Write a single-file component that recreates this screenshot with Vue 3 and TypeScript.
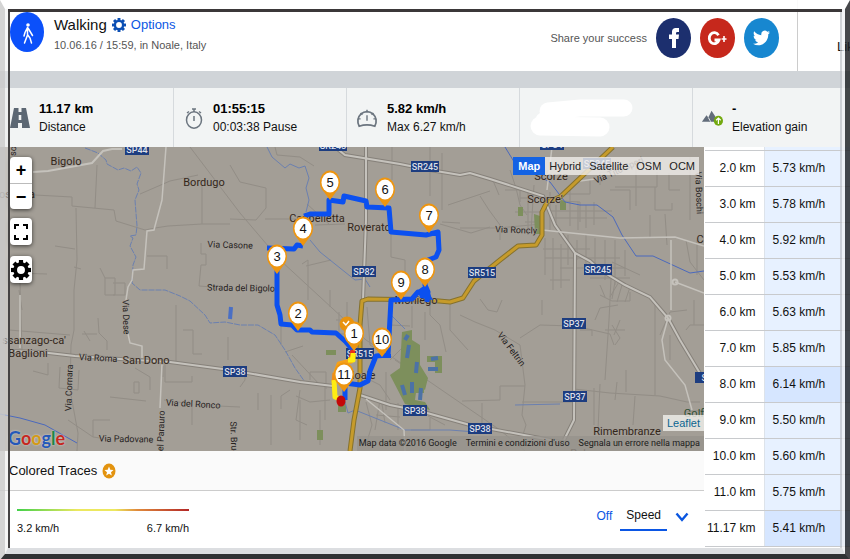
<script setup lang="ts">
import { ref } from 'vue'

interface Split { km: string; speed: string; peak?: boolean }
interface Pin { n: number; x: number; y: number }
interface Label { t: string; x: number; y: number; s?: number; r?: number }

const splits: Split[] = [
  { km: '2.0 km', speed: '5.73 km/h' },
  { km: '3.0 km', speed: '5.78 km/h' },
  { km: '4.0 km', speed: '5.92 km/h' },
  { km: '5.0 km', speed: '5.53 km/h' },
  { km: '6.0 km', speed: '5.63 km/h' },
  { km: '7.0 km', speed: '5.85 km/h' },
  { km: '8.0 km', speed: '6.14 km/h', peak: true },
  { km: '9.0 km', speed: '5.50 km/h' },
  { km: '10.0 km', speed: '5.60 km/h' },
  { km: '11.0 km', speed: '5.75 km/h' },
  { km: '11.17 km', speed: '5.41 km/h', peak: true },
]

const pins: Pin[] = [
  { n: 9, x: 401, y: 283 }, { n: 8, x: 425, y: 270 }, { n: 7, x: 429, y: 216 },
  { n: 6, x: 385, y: 190 }, { n: 5, x: 330, y: 183 }, { n: 4, x: 303, y: 229 },
  { n: 3, x: 277, y: 257 }, { n: 2, x: 298, y: 314 }, { n: 1, x: 354, y: 334 },
  { n: 10, x: 382, y: 340 }, { n: 11, x: 344, y: 375 },
]

const towns: Label[] = [
  { t: 'Bigolo', x: 66, y: 165 }, { t: 'Bordugo', x: 204, y: 186 },
  { t: 'Cappelletta', x: 317, y: 222 }, { t: 'Roverato', x: 369, y: 231 },
  { t: 'Scorze', x: 551, y: 180 }, { t: "Scorze'", x: 545, y: 203 },
  { t: 'Moniego', x: 416, y: 304 }, { t: 'Noale', x: 361, y: 379 },
  { t: "ssanzago-ca'", x: 34, y: 344 }, { t: 'Baglioni', x: 28, y: 357 },
  { t: 'San Dono', x: 146, y: 364 }, { t: 'Rimembranze', x: 627, y: 435 },
  { t: 'C', x: 700, y: 243 }, { t: 'Robegano', x: 595, y: 457 },
  { t: 'os', x: 5, y: 198 }, { t: 'a', x: 32, y: 198 },
]

const streets: Label[] = [
  { t: 'Via Casone', x: 230, y: 248, r: 2 }, { t: 'Strada del Bigolo', x: 241, y: 291, r: 1 },
  { t: 'Via Roncly', x: 516, y: 233, r: 2 }, { t: 'Via Tito Speri', x: 620, y: 173, r: -24 },
  { t: 'Via Roma', x: 98, y: 361, r: 3 }, { t: 'Via del Ronco', x: 193, y: 407, r: 3 },
  { t: 'Via Padovane', x: 126, y: 442, r: 1 }, { t: 'Via Dese', x: 123, y: 317, r: 88 },
  { t: 'Via Cornara', x: 72, y: 388, r: -88 }, { t: 'el Parauro', x: 164, y: 431, r: -88 },
  { t: 'Str. Bruga', x: 231, y: 441, r: 88 }, { t: 'Via Feltrin', x: 509, y: 351, r: 53 },
  { t: 'Via Boschi', x: 696, y: 193, r: 88 }, { t: 'so', x: 16, y: 151, r: -88 },
]

const shields: Label[] = [
  { t: 'SP44', x: 137, y: 150 }, { t: 'SR245', x: 333, y: 146 }, { t: 'SP84', x: 552, y: 145 },
  { t: 'SR245', x: 425, y: 167 }, { t: 'SP82', x: 364, y: 272 }, { t: 'SR515', x: 482, y: 273 },
  { t: 'SR245', x: 598, y: 270 }, { t: 'SP37', x: 574, y: 324 }, { t: 'SP37', x: 575, y: 397 },
  { t: 'SR515', x: 360, y: 354 }, { t: 'SP38', x: 235, y: 372 }, { t: 'SP38', x: 415, y: 411 },
  { t: 'SP38', x: 480, y: 429 }, { t: 'SP', x: 707, y: 378 }, { t: 'SR245', x: 597, y: 164 },
]

const minorRoads: string[] = [
  'M35 195 72 197V206L114 210 116 221 145 230 155 228 168 226 202 224',
  'M97 165 95 208M76 208 77 260 74 290 74 330 71 345 70 390 78 433 77 451M55 246 75 249',
  'M74 267 81 269M100 268 105 278V295H115V278H105M113 283H125V295H113M147 256H167V269',
  'M140 194 170 181 198 175M190 147 240 213 280 260 345 320 366 340 430 382 500 430 525 451',
  'M202 185V224L230 224M201 243V254H206V265H201L199 286 212 287M15 273 47 274M19 290 22 310',
  'M20 283 22 350M9 330 70 335M82 334H97M98 318 99 333 107 341 107 350M84 331 90 341',
  'M33 371 48 375V363M60 367 59 388 78 390 79 370M68 420 93 437V420H110M93 437 107 439',
  'M176 305V362M183 330H193V354H202M228 337V360M135 368 150 377V390M134 382H139V393H134Z',
  'M110 397 146 401M163 366V377M165 360V382H192V376M164 400 192 404V425M195 405 240 407',
  'M230 165 240 182 266 188V208L256 220 230 219M265 219 300 219M307 204 330 225M315 225 345 224',
  'M275 147 277 155 300 157 314 166M392 147V180M430 147V196M442 153V210M442 222 460 223',
  'M440 224 471 233 490 227M391 232 391 257 405 260V290M302 264 308 260V300M306 266 331 260',
  'M367 307 370 345 382 353M330 307V290M240 387 245 380V375M258 393V410M281 325V345M285 352 303 346',
  'M326 389V372H310V380M292 355 320 385M296 396 310 402 330 400M300 390 296 420 307 425M325 385V420',
  'M271 395V445M300 400V440M320 410V445M386 372 386 410M395 360 410 370 420 390M405 345 390 360',
  'M448 205 490 191M480 196 489 210 500 225V240M460 228 498 228 542 224M510 170 516 188 520 205 527 215',
  'M505 190H520V202M492 178 499 195M528 190V235M534 185 531 231M520 198H540M515 212H540M525 222H540',
  'M550 192V230M556 205V225M562 201 580 202V222M570 190V226M578 202V230M586 205V228M594 202V225',
  'M548 211H612M550 218H607M563 194H590V180M600 185V172H620V166M610 190H630V210M636 166V206',
  'M545 238V275M553 238V290M561 244V288M568 235V265M577 240V260M586 235V268M595 238V272M605 240V280M615 240V285',
  'M543 249H590M545 258H620M560 268H625M590 278H630M550 280H570M612 262 640 275M625 250V276',
  'M615 187H657V172M655 187V210H672V203M669 173V190H680M690 157V220M665 214 667 245M650 238V215',
  'M611 279 609 320 605 380M600 285 605 297M615 282 612 299M622 285 617 302M630 287 625 302M620 280 610 297',
  'M460 315 475 322 495 330 520 345 525 385 522 415 526 425 522 438M520 338 540 325 573 326',
  'M480 299 488 310 497 312 502 300M542 300V315M575 326 610 334 614 345M580 330H592V336',
  'M525 386H500V400L462 401M522 402 573 402M482 403V430M655 302V395M600 384 598 430M617 382 615 400',
  'M574 389 610 393 660 396 687 402 700 402M594 388V425M635 396 633 425M626 370V392M618 305 600 308 595 320',
  'M612 325 620 338 615 345M614 335 620 320M605 330H625M600 295 612 301H630V292M660 335 670 312 687 310',
  'M686 330 690 325H704M686 240 690 262 704 280M697 240V275M670 335V360M705 410 685 412M694 300V325',
  'M290 390 281 396V409M380 400 375 430M370 380 380 385 390 400M411 430H430V418M428 416 445 425',
  'M366 402 372 425 366 445M382 404 385 423M376 415 400 417M398 403 398 430M430 300V315L440 325 446 352',
  'M450 302V330L468 350M412 306V328M425 312V340M390 325 410 326M339 312V334H349M347 302V320H336',
]

const layers = ['Map', 'Hybrid', 'Satellite', 'OSM', 'OCM']
const layer = ref('Map')
const trace = ref('Speed')
const teeth = [0, 45, 90, 135, 180, 225, 270, 315]
</script>

<template>
  <div class="page">
    <header class="head">
      <span class="avatar">
        <svg viewBox="0 0 34 40" aria-hidden="true">
          <circle cx="18" cy="13" r="1.8" fill="#fff" />
          <path d="M17.5 15.5 15 20.500 14 24M18 16 21 21 22.500 23.500M17.500 16V23L14.500 31M17.800 23 20 26 21.500 31" fill="none" stroke="#fff" stroke-width="1.500" stroke-linecap="round" />
        </svg>
      </span>
      <div class="title">
        <h1>
          Walking
          <a class="options" href="#options">
            <svg class="gear" viewBox="-12 -12 24 24" aria-hidden="true">
              <circle r="7" fill="none" stroke="currentColor" stroke-width="4" />
              <rect v-for="a in teeth" :key="a" x="-2.500" y="-12" width="5" height="5" fill="currentColor" :transform="`rotate(${a})`" />
            </svg>
            Options
          </a>
        </h1>
        <p>10.06.16 / 15:59, in Noale, Italy</p>
      </div>
      <div class="share">
        <span>Share your success</span>
        <a class="soc fb" href="#facebook" aria-label="Facebook">
          <svg viewBox="0 0 35 40"><path d="M16 30V21H13V16.500H16V14.500C16 11 17.500 10 20 10H23V14H21.500C20.300 14 20 14.500 20 15.500V16.500H23L22.500 21H20V30Z" fill="#fff" /></svg>
        </a>
        <a class="soc gp" href="#google" aria-label="Google Plus">
          <svg viewBox="0 0 35 40"><path d="M18.500 17.200A5 5.500 0 1 0 19 22H14.500" fill="none" stroke="#fff" stroke-width="2.800" /><path d="M24 18V24M21.500 21H26.500" stroke="#fff" stroke-width="1.600" /></svg>
        </a>
        <a class="soc tw" href="#twitter" aria-label="Twitter">
          <svg viewBox="0 0 24 24" preserveAspectRatio="none" class="bird"><path d="M23.950 4.570a10 10 0 0 1-2.820.770 4.960 4.960 0 0 0 2.160-2.720c-.95.560-2 .960-3.130 1.180a4.920 4.920 0 0 0-8.380 4.480C7.690 8.090 4.070 6.130 1.640 3.160a4.820 4.820 0 0 0-.67 2.480c0 1.710.87 3.210 2.190 4.100a4.900 4.900 0 0 1-2.230-.620v.06a4.920 4.920 0 0 0 3.950 4.830 5 5 0 0 1-2.210.080 4.940 4.940 0 0 0 4.600 3.420A9.870 9.870 0 0 1 0 19.540a14 14 0 0 0 7.550 2.210c9.050 0 14-7.500 14-13.980 0-.21 0-.42-.02-.630a9.940 9.940 0 0 0 2.460-2.550z" fill="#fff" /></svg>
        </a>
      </div>
      <div class="like">Like</div>
    </header>

    <section class="stats">
      <div class="stat first">
        <svg class="ico" viewBox="0 0 20 22"><path d="M4 1H8.500V5H11.500V1H16L20 21H12V16H8V21H0ZM8.700 8V13H11.300V8Z" fill="#5c6773" fill-rule="evenodd" /></svg>
        <div><b>11.17 km</b><span>Distance</span></div>
      </div>
      <div class="stat">
        <svg class="ico" viewBox="0 0 20 22"><g fill="none" stroke="#6c757f" stroke-width="1.500"><ellipse cx="10" cy="13" rx="7.500" ry="8.200" /><path d="M10 9V14M8 2H12M10 2V5M3 6 5 4.500M17 6 15 4.500" /></g></svg>
        <div><b>01:55:15</b><span>00:03:38 Pause</span></div>
      </div>
      <div class="stat">
        <svg class="ico wide" viewBox="0 0 24 22"><g fill="none" stroke="#6c757f" stroke-width="1.900"><path d="M3.500 20A10 10.500 0 1 1 20.500 20Q12 17 3.500 20Z" /><path d="M12 8V14M12 2V5M2 12H5M19 12H22M5 5.500 7 7.500M19 5.500 17 7.500" stroke-width="1.500" /></g></svg>
        <div><b>5.82 km/h</b><span>Max 6.27 km/h</span></div>
      </div>
      <div class="stat blank">
        <svg viewBox="0 0 104 38" aria-hidden="true"><g fill="none" stroke="#fff" stroke-linecap="round"><path d="M18 12 50 9 94 9" stroke-width="17" /><path d="M10 27 70 28" stroke-width="19" /><path d="M14 22 34 12" stroke-width="18" /></g></svg>
      </div>
      <div class="stat">
        <svg class="ico wide" viewBox="0 0 24 22"><path d="M1 15 6 8 8 10.500 11.500 3 16 10V15Z" fill="#626c7a" /><path d="M8 10.500 10.500 15" stroke="#f2f4f4" /><ellipse cx="19" cy="14" rx="5" ry="5.500" fill="#73a90f" /><path d="M19 17.500V12M16.500 13.500 19 11 21.500 13.500" stroke="#fff" stroke-width="1.300" fill="none" /></svg>
        <div><b>-</b><span>Elevation gain</span></div>
      </div>
    </section>

    <main class="main">
      <div class="left">
        <div class="map">
          <svg class="canvas" viewBox="0 147 704 304" preserveAspectRatio="xMidYMid slice">
            <rect x="0" y="147" width="704" height="304" fill="#a39e96" />
            <g fill="none" stroke="#8d8881" stroke-width="1" opacity=".75">
              <path v-for="d in minorRoads" :key="d" :d="d" />
            </g>
            <path d="M402 332 412 330 412 340 420 345V365L428 378 425 390 417 385 415 400 425 402 430 410 405 404 390 375 400 368ZM427 356H442V373H435V362H427ZM412 378H424V393H412ZM338 402H346V412H338ZM317 430H323V440H317ZM326 350H336V355H326ZM518 207H523V216H518ZM534 214 540 216V234H535ZM560 199 566 202V210H560Z" fill="#7d8f5c" />
            <path d="M405 340 408 335M409 345 407 358M417 362 416 373M412 382V393M421 388 420 400M402 385 405 395M428 369H438M431 359 438 358" stroke="#4c72a6" stroke-width="4" fill="none" />
            <path d="M231 307 230 319" stroke="#4a6fc4" stroke-width="4" />
            <g fill="none" stroke="#6b80b0" stroke-width="1">
              <path d="M85 148 98 153 106 160 107 164 118 170 124 168 131 171 137 167 141 173 137 184 139 190 135 200 137 226 136 235 130 236 133 238 130 246 136 257 133 265 132 283 140 290 165 290 180 296 190 301 205 315 210 323 225 322 240 325 258 325 275 335 285 350 295 368 305 382" stroke-dasharray="6 1" />
              <path d="M267 147 272 157 285 168 290 164 299 168 305 166 309 178 306 188 309 200 306 212M310 240 320 252 345 272 355 280 365 279 370 287" />
              <path d="M505 147 516 165 550 182 565 202 580 205 597 205 613 217 622 235 636 256 653 256 690 273 704 271" stroke="#4b69bd" />
              <path d="M0 414 20 418 45 425 77 443" stroke="#4b69bd" /><path d="M392 316 405 329M344 398 348 413 355 410 380 420 405 430 450 430 475 432M515 405 560 404" />
            </g>
            <g fill="none" stroke="#86817a" stroke-width="4">
              <path d="M8 351 40 352 75 356 135 360 170 362 230 370 300 382 333 386M360 395 390 405 420 411 470 425 540 438 565 443" />
              <path d="M335 147 345 155 400 164 430 170 460 175 470 173 490 179 543 196 555 225 575 253 590 261 600 270 625 285 650 297 668 318 680 340 695 365 704 380" />
              <path d="M366 147 366 220 363 300M575 253 574 420 564 440" />
            </g>
            <g fill="none" stroke="#c5c2bc" stroke-width="2">
              <path d="M33 172 48 171 92 163 103 151 112 149H122" />
              <path d="M166 147 162 200 155 226 154 230 147 231 144 269 133 270 132 280 128 287 126 300M128 334 130 343 142 346V358M162 364 160 408M20 295 20 348" stroke-width="1.500" />
              <path d="M8 351 40 352 75 356 135 360 170 362 230 370 300 382 333 386M360 395 390 405 420 411 470 425 540 438 565 443" />
              <path d="M335 147 345 155 400 164 430 170 460 175 470 173 490 179 543 196 555 225 575 253 590 261 600 270 625 285 650 297 668 318 680 340 695 365 704 380" />
              <path d="M366 147 366 220 363 300M575 253 574 420 564 440" />
              <path d="M366 399 404 430 405 451M552 147 547 190M542 230 620 238 675 237 704 246M668 318 662 340 665 360 685 385 692 410M671 310V240M675 282 704 293M580 181 595 179" stroke-width="1.500" />
              <circle cx="675" cy="282" r="2.500" /><circle cx="668" cy="318" r="2.500" />
            </g>
            <g fill="none" stroke-linejoin="round">
              <path d="M613 147 560 197 547 202 542 212V235L536 245 518 246 500 260 474 281 463 298 450 302 428 300 368 299 362 301 360 325V388L354 420 350 451" stroke="#85712d" stroke-width="5" />
              <path d="M613 147 560 197 547 202 542 212V235L536 245 518 246 500 260 474 281 463 298 450 302 428 300 368 299 362 301 360 325V388L354 420 350 451" stroke="#c69b2b" stroke-width="3" />
            </g>

            <g class="towns"><text v-for="l in towns" :key="l.t + l.x" :x="l.x" :y="l.y">{{ l.t }}</text></g>
            <g class="streets"><text v-for="l in streets" :key="l.t" :transform="`translate(${l.x} ${l.y}) rotate(${l.r})`">{{ l.t }}</text></g>
            <text class="golf" x="694" y="417">Golf</text>
            <g class="shields">
              <g v-for="l in shields" :key="l.t + l.x" :transform="`translate(${l.x} ${l.y})`">
                <rect :x="l.t.length > 4 ? -14 : -12" y="-6" :width="l.t.length > 4 ? 28 : 24" height="11" />
                <text y="3">{{ l.t }}</text>
              </g>
            </g>

            <g fill="none" stroke-width="5" stroke-linejoin="round">
              <path d="M353 350 346 342 336 333 312 332 310 330 297 330 292 325 281 324 280 315 277 305V250M267 248 294 249 297 245 303 246M304 216 310 214 329 214V200L343 202 344 196 366 201 367 207 389 208 391 232 426 235 438 232 439 250 436 257 428 260 425 285 428 292 427 302 M430 297 418 292 412 299 391 300 388 355 376 356 370 371 368 381 360 385 345 383V400" stroke="#0b50f0" />
              <path d="M353 350 351 360" stroke="#e8301c" />
              <path d="M354 354 351 361 339 364 335 375" stroke="#f5a11a" />
              <path d="M353 353V360H348" stroke="#ffee10" />
              <path d="M335 373 334 382" stroke="#ef8d18" />
              <path d="M334 380 335 397 340 399" stroke="#ffec12" />
            </g>
            <path d="M382 354H391V358H378ZM418 290 425 285 433 300 420 298Z" fill="#0b50f0" />
            <ellipse cx="341" cy="401" rx="4.500" ry="5.500" fill="#c40808" />
            <circle cx="347" cy="324" r="7.500" fill="#e8930f" />
            <path d="M343 322 346 325 349 321" fill="none" stroke="#fff" stroke-width="1.500" />
            <g class="pins">
              <g v-for="p in pins" :key="p.n" :transform="`translate(${p.x} ${p.y})`">
                <path d="M0 17 -6 9A10 12 0 1 1 6 9Z" fill="#ee950f" />
                <ellipse cy="-.5" rx="8.500" ry="10" fill="#fff" />
                <text y="4">{{ p.n }}</text>
              </g>
            </g>
          </svg>

          <div class="tools">
            <div class="zoomer">
              <button type="button" aria-label="Zoom in">+</button>
              <button type="button" aria-label="Zoom out">−</button>
            </div>
            <button type="button" class="tool" aria-label="Full screen">
              <svg viewBox="0 0 16 18"><path d="M2 6V2H6M10 2H14V6M14 12V16H10M6 16H2V12" fill="none" stroke="#000" stroke-width="2" /></svg>
            </button>
            <button type="button" class="tool" aria-label="Map settings">
              <svg class="cog" viewBox="-12 -12 24 24">
                <circle r="7" fill="none" stroke="#000" stroke-width="4.500" />
                <rect v-for="a in teeth" :key="a" x="-2.500" y="-12" width="5" height="5" :transform="`rotate(${a})`" />
              </svg>
            </button>
          </div>

          <div class="layers">
            <button v-for="l in layers" :key="l" type="button" :class="{ on: l === layer }" @click="layer = l">{{ l }}</button>
          </div>

          <div class="logo"><i class="b">G</i><i class="r">o</i><i class="y">o</i><i class="b">g</i><i class="g">l</i><i class="r">e</i></div>
          <div class="credits">
            <a class="leaflet" href="#leaflet">Leaflet</a>
            <div class="legal"><span>Map data ©2016 Google</span><a href="#terms">Termini e condizioni d'uso</a><a href="#report">Segnala un errore nella mappa</a></div>
          </div>
        </div>

        <div class="traces">
          Colored Traces
          <svg viewBox="0 0 14 16"><ellipse cx="7" cy="8" rx="6.500" ry="7.500" fill="#e3930f" /><path d="M7 3.500 8.300 6.800 11.500 7 9 9.200 9.800 12.500 7 10.700 4.200 12.500 5 9.200 2.500 7 5.700 6.800Z" fill="#fff" /></svg>
        </div>
        <div class="legend">
          <div class="scale">
            <div class="bar"></div>
            <div class="ends"><span>3.2 km/h</span><span>6.7 km/h</span></div>
          </div>
          <div class="modes">
            <button type="button" :class="{ sel: trace === 'Off' }" @click="trace = 'Off'">Off</button>
            <button type="button" :class="{ sel: trace === 'Speed' }" @click="trace = 'Speed'">Speed</button>
            <svg viewBox="0 0 14 10"><path d="M1.500 1.500 7 8 12.500 1.500" fill="none" stroke="#0a56e0" stroke-width="2.400" /></svg>
          </div>
        </div>
      </div>

      <table class="splits">
        <tbody>
          <tr class="stub"><td></td><td></td></tr>
          <tr v-for="s in splits" :key="s.km">
            <td>{{ s.km }}</td>
            <td :class="{ peak: s.peak }">{{ s.speed }}</td>
          </tr>
        </tbody>
      </table>
    </main>

    <div class="frame"><div class="inner"></div></div>
  </div>
</template>

<style>
body { background: #fff; }
</style>

<style scoped>
.page {
  position: relative;
  overflow: hidden;
  padding-bottom: 13px;
  background: #fff;
  color: #111;
  font: 12px/20px "Liberation Sans", Arial, sans-serif;
}
a { text-decoration: none; color: inherit; }
button { font: inherit; border: 0; padding: 0; margin: 0; background: none; cursor: pointer; }
svg { display: block; }

.head { display: flex; height: 71px; align-items: stretch; overflow: hidden; }
.avatar { margin: 12px 10px 0; width: 34px; height: 40px; border-radius: 50%; background: #0b50fa; flex: none; }
.title { padding-top: 15px; white-space: nowrap; }
h1 { display: flex; margin: 0; gap: 5px; font-size: 15px; line-height: 20px; font-weight: 400; }
.options { display: flex; align-items: center; gap: 5px; color: #0b56e4; font-size: 13px; }
.gear { width: 14px; height: 16px; color: #0b4fb4; }
.title p { margin: 0; color: #555; font-size: 11px; }
.share { display: flex; align-items: center; gap: 9px; margin-left: auto; padding: 5px 18px 0 0; color: #555; font-size: 11px; white-space: nowrap; }
.soc { width: 35px; height: 40px; border-radius: 50%; display: grid; place-items: center; }
.soc svg { width: 35px; height: 40px; }
.soc .bird { width: 17px; height: 18px; }
.fb { background: #1c2f6e; }
.gp { background: #c6281c; }
.tw { background: #1787d0; }
.like { flex: none; width: 13px; padding: 37px 0 0 39px; border-left: 1px solid #ccc; white-space: nowrap; font-size: 13px; }

.stats { display: grid; grid-template-columns: 174fr 173fr 173fr 173fr 157fr; border-top: 17px solid #d0d4d8; background: #f2f4f4; height: 59px; }
.stat { display: flex; align-items: center; gap: 9px; padding-left: 10px; border-right: 1px solid #d6dadd; white-space: nowrap; }
.stat:last-child { border-right: 0; padding-left: 9px; }
.stat b, .stat span { display: block; line-height: 19px; }
.stat b { font-size: 13px; color: #000; }
.ico { width: 20px; height: 22px; }
.ico.wide { width: 22px; height: 22px; margin-left: -1px; }
.blank svg { width: 104px; height: 38px; }

.main { display: flex; align-items: flex-start; }
.left { flex: 1; min-width: 0; }
.map { position: relative; }
.canvas { width: 100%; height: 304px; font-family: Roboto, sans-serif; }
.towns { font-size: 11px; fill: #33261a; text-anchor: middle; stroke: #a39e96; stroke-width: 1px; paint-order: stroke; }
.streets { font-size: 9px; fill: #26221e; text-anchor: middle; stroke: #a39e96; stroke-width: 1px; paint-order: stroke; }
.golf { font-size: 11px; fill: #2f5034; text-anchor: middle; }
.shields rect { fill: #1d3d80; }
.shields text { fill: #dcdfe6; font-size: 9px; font-weight: 500; text-anchor: middle; }
.pins text { font: 13px "Liberation Sans", sans-serif; text-anchor: middle; fill: #111; }

.tools { position: absolute; left: 10px; top: 10px; width: 22px; display: grid; gap: 9px; }
.zoomer, .tool { background: #fff; border-radius: 4px; box-shadow: 0 1px 4px rgba(0, 0, 0, .65); }
.zoomer button { display: block; width: 22px; height: 26px; font: bold 18px/24px "Liberation Sans", sans-serif; color: #000; }
.zoomer button + button { border-top: 1px solid #bbb; }
.tool { height: 27px; display: grid; place-items: center; margin-bottom: 2px; }
.tool svg { width: 16px; height: 18px; }
.tool .cog { width: 20px; height: 22px; }
.layers { position: absolute; right: 5px; top: 10px; display: flex; background: rgba(240, 238, 235, .8); }
.layers button { padding: 0 4px; line-height: 18px; font-size: 11px; color: #222; }
.layers .on { padding: 0 5px; background: #1463e4; color: #fff; font-weight: 700; }
.logo { position: absolute; left: 8px; bottom: 2px; font: 18px/22px Lato, sans-serif; text-shadow: 0 0 2px #ddd; }
.logo i { font-style: normal; font-weight: 700; }
.b { color: #2558b8; }
.r { color: #c5281f; }
.y { color: #d39a17; }
.g { color: #1d8746; }
.credits { position: absolute; right: 0; bottom: 0; display: flex; flex-direction: column; align-items: flex-end; gap: 5px; }
.leaflet { padding: 0 4px; background: rgba(240, 240, 236, .8); color: #0b6590; font-size: 11px; line-height: 16px; }
.legal { display: flex; gap: 9px; padding: 0 4px 0 2px; background: rgba(150, 146, 140, .8); font: 9px/15px Roboto, sans-serif; color: #1c1c1c; white-space: nowrap; }

.traces { display: flex; align-items: center; gap: 5px; height: 39px; padding-left: 9px; background: #fafafa; border-bottom: 1px solid #ccc; font-size: 13px; }
.traces svg { width: 14px; height: 16px; }
.legend { display: flex; justify-content: space-between; padding: 18px 15px 0 17px; }
.scale { width: 172px; font-size: 11px; }
.bar { height: 2px; background: linear-gradient(90deg, #42d04a, #ece860 35%, #ece860 57%, #e08a3c 70%, #b32727); }
.ends { display: flex; justify-content: space-between; padding-top: 7px; }
.modes { display: flex; align-items: flex-start; gap: 8px; margin-top: -4px; }
.modes button { height: 26px; padding-bottom: 4px; color: #0b56e4; }
.modes .sel { padding: 0 6px 4px; border-bottom: 2px solid #0b56e4; color: #111; }
.modes svg { width: 14px; height: 10px; margin-top: 7px; }

.splits { flex: none; width: 145px; border-collapse: collapse; margin-left: 1px; background: #fff; table-layout: fixed; }
.splits td { box-sizing: border-box; height: 36px; padding: 0; border-bottom: 1px solid #c8cacd; white-space: nowrap; }
.splits td:first-child { width: 59px; padding-right: 8px; text-align: right; border-right: 1px solid #dde3ea; }
.splits td:last-child { padding-left: 8px; background: #e7f1ff; }
.splits td.peak { background: #d6e6ff; }
.splits .stub td { height: 3px; }

/* Bevelled picture frame laid over the whole page */
.frame {
  position: absolute;
  inset: 0;
  pointer-events: none;
  border-style: solid;
  border-width: 9px 5px 6px 5px;
  border-color: rgba(255, 255, 255, .9) rgba(30, 32, 35, .82) #303234 rgba(205, 205, 205, .85);
}
.inner {
  height: 100%;
  box-sizing: border-box;
  border-style: solid;
  border-width: 0 3px 6px 3px;
  border-color: transparent rgba(240, 241, 243, .75) #dcdee1 rgba(235, 235, 235, .5);
  box-shadow: inset 0 3px #3b3839, inset 2px 0 #454344, inset -2px 0 rgba(190, 192, 198, .7);
}
</style>
